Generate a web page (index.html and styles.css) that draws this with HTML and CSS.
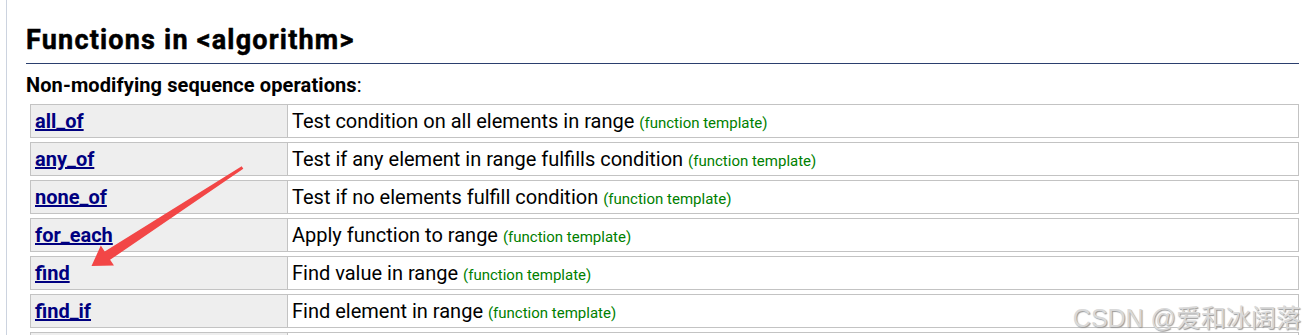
FILE: index.html
```html
<!DOCTYPE html>
<html>
<head>
<meta charset="utf-8">
<link rel="stylesheet" href="styles.css">
</head>
<body>
<div class="page">
  <div class="content">
    <h1 class="title">Functions in &lt;algorithm&gt;</h1>
    <div class="rule"></div>
    <h3 class="section"><b>Non-modifying sequence operations</b>:</h3>
    <div class="links">
      <div class="row"><div class="name"><a href="#">all_of</a></div><div class="desc">Test condition on all elements in range <span class="kind">(function template)</span></div></div>
      <div class="row"><div class="name"><a href="#">any_of</a></div><div class="desc">Test if any element in range fulfills condition <span class="kind">(function template)</span></div></div>
      <div class="row"><div class="name"><a href="#">none_of</a></div><div class="desc">Test if no elements fulfill condition <span class="kind">(function template)</span></div></div>
      <div class="row"><div class="name"><a href="#">for_each</a></div><div class="desc">Apply function to range <span class="kind">(function template)</span></div></div>
      <div class="row"><div class="name"><a href="#">find</a></div><div class="desc">Find value in range <span class="kind">(function template)</span></div></div>
      <div class="row"><div class="name"><a href="#">find_if</a></div><div class="desc">Find element in range <span class="kind">(function template)</span></div></div>
      <div class="row row-last"><div class="name"></div><div class="desc"></div></div>
    </div>
  </div>
  <svg class="arrow" width="170" height="110" viewBox="0 0 170 110">
    <polygon points="161.7,6.2 163.3,8.8 30.1,99.8 34,105.6 11.5,106 20.8,85.6 24.7,91.4" fill="#f24646"/>
  </svg>
  <div class="watermark">CSDN @爱和冰阔落</div>
</div>
</body>
</html>
```
FILE: styles.css
```css
html, body {
  margin: 0;
  padding: 0;
  background: #ffffff;
}
body {
  font-family: Roboto, "Noto Sans", Arial, sans-serif;
  color: #000;
  overflow: hidden;
}
.page {
  position: relative;
  height: 335px;
  overflow: hidden;
}
.content {
  margin-left: 6px;
  border-left: 1px solid #ccd3df;
  padding: 0 8px 0 19px;
  height: 335px;
  box-sizing: border-box;
}
.title {
  margin: 0;
  padding-top: 24px;
  font-size: 27px;
  font-weight: 700;
  line-height: 32px;
  letter-spacing: 1.2px;
  -webkit-text-stroke: 0.5px #000;
}
.rule {
  height: 1px;
  background: #2b3f6e;
  margin-top: 7px;
}
.section {
  margin: 9px 0 0 0;
  font-size: 20px;
  font-weight: 400;
  line-height: 24px;
}
.section b {
  font-weight: 700;
  letter-spacing: 0.1px;
}
.links {
  margin: 7px 0 0 4px;
  display: flex;
  flex-direction: column;
  gap: 4px;
}
.row {
  display: flex;
  height: 34px;
  box-sizing: border-box;
  border: 1px solid #c3c3c3;
  flex-shrink: 0;
}
.name {
  width: 257px;
  box-sizing: border-box;
  background: #eeeeee;
  border-right: 1px solid #c3c3c3;
  padding-left: 4px;
  font-size: 20px;
  line-height: 32px;
  font-weight: 700;
}
.name a {
  color: #000080;
  text-decoration: underline;
}
.desc {
  flex: 1;
  padding-left: 4px;
  font-size: 20px;
  line-height: 32px;
  white-space: nowrap;
}
.kind {
  color: #008000;
  font-size: 15px;
}
.arrow {
  position: absolute;
  left: 80px;
  top: 160px;
}
.watermark {
  position: absolute;
  right: 6px;
  top: 298px;
  font-family: Arial, "Liberation Sans", "Noto Sans CJK SC", sans-serif;
  font-size: 25px;
  color: #d9d9d9;
  text-shadow: 1px 1px 1px #9a9a9a;
  white-space: nowrap;
}
```
